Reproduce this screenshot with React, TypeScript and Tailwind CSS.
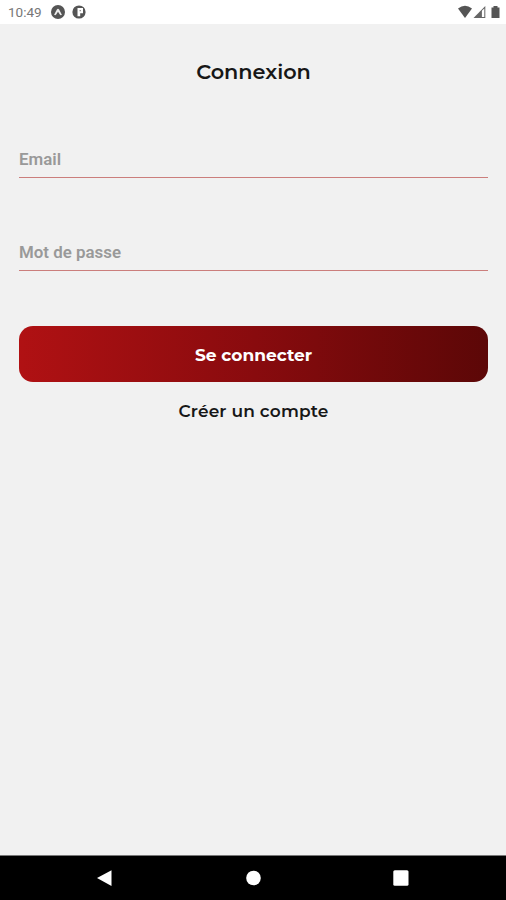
import React from 'react';

function StatusBar() {
  return (
    <header className="flex h-6 shrink-0 items-center justify-between bg-white text-[#555]">
      <div className="flex items-center pl-2">
        <span className="w-[43px] whitespace-nowrap font-[Roboto,sans-serif] text-[13.5px] leading-6 text-[#777]">10:49</span>
        <svg className="h-[14px] w-[14px]" viewBox="0 0 14 14">
          <circle cx="7" cy="7" r="7" fill="#555" />
          <path d="M3.1 9.8 5.9 4.4Q7 3 8.1 4.4L10.9 9.8Q9.7 10.8 8.8 9.5L7 6.8 5.2 9.5Q4.3 10.8 3.1 9.8Z" fill="#eee" />
        </svg>
        <svg className="ml-[7px] h-[14px] w-[14px]" viewBox="0 0 14 14">
          <circle cx="7" cy="7" r="6.6" fill="#555" />
          <path d="M5.5 3H11v5.2H8.2v3H5.5z" fill="#fff" />
          <path d="M7.6 5h1.3v1.3H7.6z" fill="#888" />
        </svg>
      </div>
      <svg className="h-6 w-[50px]" viewBox="456 0 50 24">
        <path d="M458 8.4Q465 3 472 8.4L465 18Z" fill="#555" />
        <path d="M473.5 18 485.3 6V18Z" fill="#666" />
        <path d="M481.9 10.8 484.3 8.4V17H481.9Z" fill="#fff" />
        <path d="M491.5 7.5h2V6h4v1.5h2V18h-8Z" fill="#555" />
      </svg>
    </header>
  );
}

function Field({ label, type }: { label: string; type: string }) {
  return (
    <div className="h-[38px] border-b border-[#cb7e7c]">
      <input
        type={type}
        aria-label={label}
        placeholder={label}
        className="block h-[37px] w-full bg-transparent pt-px font-[Roboto,sans-serif] text-[16.9px] font-semibold outline-none placeholder:text-[#999] placeholder:opacity-100"
      />
    </div>
  );
}

function NavigationBar() {
  return (
    <footer className="flex h-[45px] shrink-0 items-center border-t border-[#777] bg-black">
      <svg className="h-11 w-full" viewBox="0 856 506 44" fill="#fff">
        <path d="M97 878 111.5 870.2V886Z" />
        <circle cx="253.5" cy="878" r="7.3" />
        <rect x="393.3" y="870.3" width="15.2" height="15.4" rx="1.5" />
      </svg>
    </footer>
  );
}

export default function App() {
  return (
    <div className="flex h-[900px] w-[506px] flex-col overflow-hidden bg-[#f1f1f1]">
      <StatusBar />
      <main className="flex flex-1 flex-col pl-[19px] pr-[18px] font-[Montserrat,Inter,sans-serif] text-[#171717]">
        <h1 className="mt-8 text-center text-[20.8px] font-semibold leading-8">Connexion</h1>
        <div className="mt-[52px]"><Field label="Email" type="email" /></div>
        <div className="mt-[55px]"><Field label="Mot de passe" type="password" /></div>
        <button className="mt-[55px] h-14 w-full rounded-[14px] bg-linear-to-r from-[#b01113] via-[#890b0e] to-[#5c0707] pt-[3px] text-[17px] font-bold text-white">
          Se connecter
        </button>
        <button className="mt-[17px] self-center text-[17px] font-semibold leading-6 tracking-[0.15px]">Créer un compte</button>
      </main>
      <NavigationBar />
    </div>
  );
}
